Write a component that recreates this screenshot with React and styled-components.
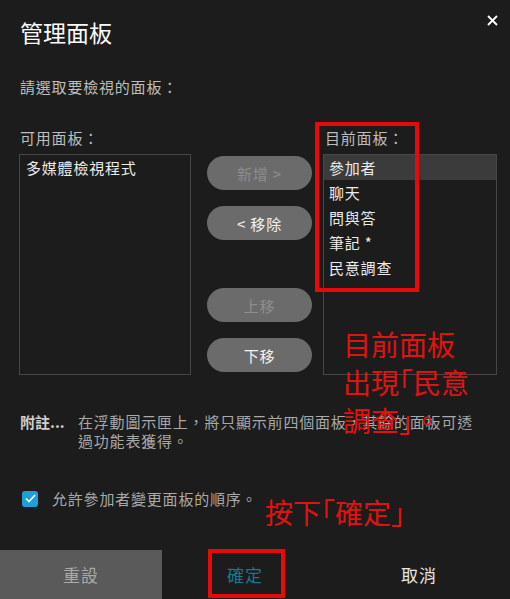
import React from "react";
import styled, { createGlobalStyle } from "styled-components";

const Global = createGlobalStyle`
  html, body {
    margin: 0;
    background: #1c1c1c;
  }
  body {
    font-family: "Noto Sans CJK TC", "Noto Sans", sans-serif;
  }
`;

const Dialog = styled.div`
  position: relative;
  width: 510px;
  height: 599px;
  background: #1c1c1c;
  color: #ddd;
  letter-spacing: 0.8px;
  display: flex;
  flex-direction: column;
  overflow: hidden;
`;

const Title = styled.h1`
  margin: 20px 0 0 20px;
  font-size: 23px;
  line-height: 24px;
  font-weight: 400;
  letter-spacing: 0;
  color: #fafafa;
`;

const Close = styled.button`
  position: absolute;
  top: 12px;
  right: 10px;
  width: 16px;
  height: 16px;
  padding: 0;
  border: none;
  background: none;
  display: flex;
  align-items: center;
  justify-content: center;
`;

const Prompt = styled.p`
  margin: 33px 0 0 20px;
  font-size: 15px;
  line-height: 20px;
  color: #bdbdbd;
`;

const Panels = styled.div`
  display: flex;
  margin: 31px 0 0 19px;
`;

const Column = styled.div`
  display: flex;
  flex-direction: column;
  width: ${(p) => p.w}px;
`;

const Label = styled.div`
  font-size: 15px;
  line-height: 20px;
  height: 20px;
  margin-bottom: 6px;
  padding-left: ${(p) => p.pad || 1}px;
  color: #bdbdbd;
`;

const List = styled.ul`
  list-style: none;
  margin: 0;
  padding: 0;
  height: 221px;
  box-sizing: border-box;
  border: 1px solid #474747;
`;

const Item = styled.li`
  height: 25px;
  line-height: 25px;
  padding-left: ${(p) => p.pad}px;
  font-size: 15px;
  color: #ececec;
  background: ${(p) => (p.selected ? "#3b3b3b" : "transparent")};
`;

const Middle = styled.div`
  display: flex;
  flex-direction: column;
  width: 105px;
  margin: 28px 11px 0 16px;
`;

const Pill = styled.button`
  height: 34px;
  margin-top: ${(p) => p.gap}px;
  border: none;
  border-radius: 17px;
  background: #6b6b6b;
  color: ${(p) => (p.disabled ? "#8e8e8e" : "#f2f2f2")};
  font-family: inherit;
  font-size: 15px;
  letter-spacing: 0.8px;
  white-space: pre;
  padding: 0;
`;

const Note = styled.div`
  display: flex;
  margin: 37px 0 0 20px;
  font-size: 15px;
  line-height: 19px;
`;

const NoteHead = styled.span`
  width: 58px;
  flex: none;
  font-weight: 700;
  letter-spacing: 0;
  color: #cfcfcf;
`;

const NoteText = styled.span`
  width: 402px;
  color: #a9a9a9;
`;

const CheckRow = styled.label`
  display: flex;
  align-items: center;
  gap: 14px;
  margin: 38px 0 0 22px;
  font-size: 15px;
  color: #a9a9a9;
`;

const Box = styled.span`
  width: 16px;
  height: 16px;
  border-radius: 3px;
  background: #1f9fd8;
  display: flex;
  align-items: center;
  justify-content: center;
`;

const Footer = styled.div`
  margin-top: auto;
  height: 49px;
  display: grid;
  grid-template-columns: 162px 166px 1fr;
`;

const FootButton = styled.button`
  border: none;
  background: ${(p) => p.bg || "transparent"};
  color: ${(p) => p.fg};
  font-family: inherit;
  font-size: 17px;
  letter-spacing: 1px;
  padding: 0;
`;

const RedBox = styled.div`
  position: absolute;
  left: ${(p) => p.x}px;
  top: ${(p) => p.y}px;
  width: ${(p) => p.w}px;
  height: ${(p) => p.h}px;
  box-sizing: border-box;
  border: 4px solid #e50b0b;
  pointer-events: none;
`;

const RedNote = styled.div`
  position: absolute;
  left: ${(p) => p.x}px;
  top: ${(p) => p.y}px;
  font-size: 28px;
  line-height: 38px;
  letter-spacing: 0;
  color: #e01212;
  white-space: pre;
`;

const current = ["參加者", "聊天", "問與答", "筆記 *", "民意調查"];

export default function App() {
  return (
    <>
      <Global />
      <Dialog>
        <Title>管理面板</Title>
        <Close aria-label="close">
          <svg width="11" height="11" viewBox="0 0 11 11">
            <path d="M1 1L10 10M10 1L1 10" stroke="#fff" strokeWidth="1.8" />
          </svg>
        </Close>
        <Prompt>請選取要檢視的面板：</Prompt>

        <Panels>
          <Column w={172}>
            <Label>可用面板：</Label>
            <List>
              <Item pad={6}>多媒體檢視程式</Item>
            </List>
          </Column>
          <Middle>
            <Pill disabled gap={0}>新增 &gt;</Pill>
            <Pill gap={16}>&lt; 移除</Pill>
            <Pill disabled gap={48}>上移</Pill>
            <Pill gap={16}>下移</Pill>
          </Middle>
          <Column w={174}>
            <Label pad={2}>目前面板：</Label>
            <List>
              {current.map((t, i) => (
                <Item key={t} pad={5} selected={i === 0}>
                  {t}
                </Item>
              ))}
            </List>
          </Column>
        </Panels>

        <Note>
          <NoteHead>附註...</NoteHead>
          <NoteText>
            在浮動圖示匣上，將只顯示前四個面板，其餘的面板可透過功能表獲得。
          </NoteText>
        </Note>

        <CheckRow>
          <Box>
            <svg width="11" height="9" viewBox="0 0 11 9">
              <path d="M1 4.5L4 7.5L10 1" fill="none" stroke="#fff" strokeWidth="1.6" />
            </svg>
          </Box>
          允許參加者變更面板的順序。
        </CheckRow>

        <Footer>
          <FootButton bg="#5a5a5a" fg="#a9a9a9">重設</FootButton>
          <FootButton fg="#1b7796">確定</FootButton>
          <FootButton fg="#e6e6e6">取消</FootButton>
        </Footer>

        <RedBox x={315} y={122} w={104} h={170} />
        <RedBox x={208} y={549} w={77} h={49} />
        <RedNote x={343} y={325}>{"目前面板\n出現｢民意\n調查｣。"}</RedNote>
        <RedNote x={265} y={493}>按下｢確定｣</RedNote>
      </Dialog>
    </>
  );
}
